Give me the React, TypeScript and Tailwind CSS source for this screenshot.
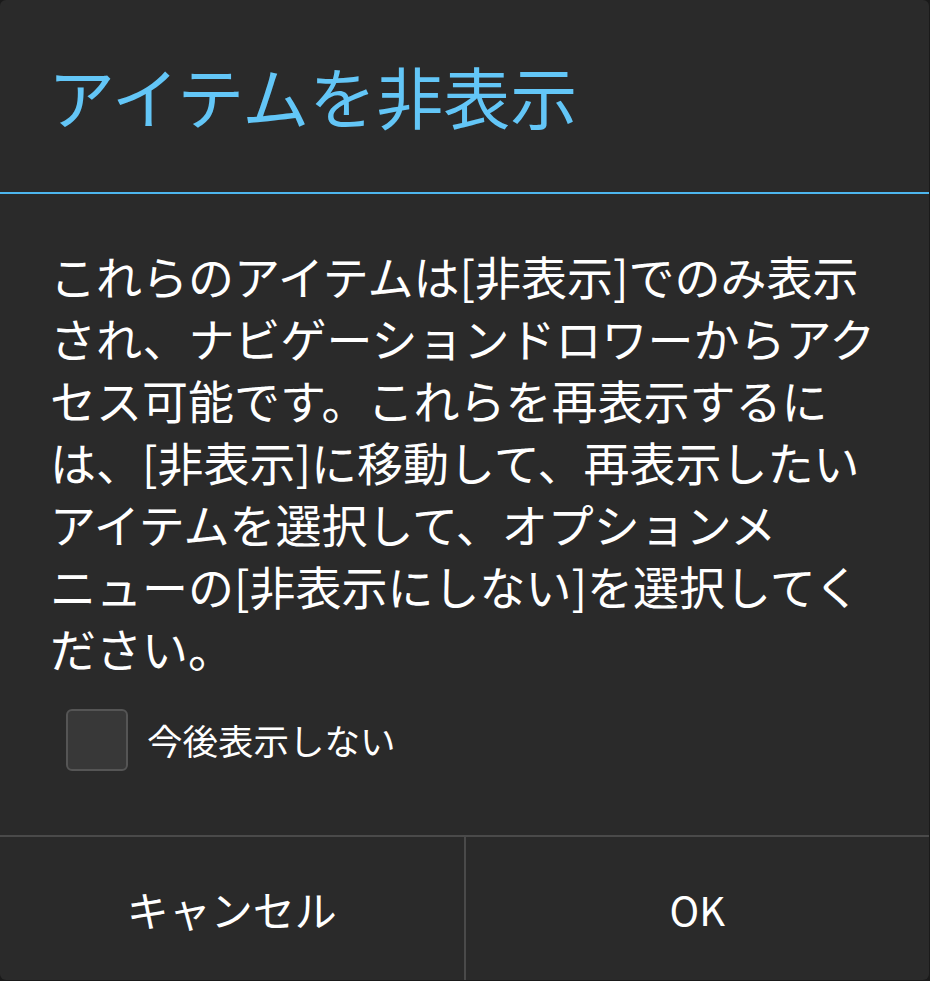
import React, { useState } from "react";

const lines = [
  "これらのアイテムは[非表示]でのみ表示",
  "され、ナビゲーションドロワーからアク",
  "セス可能です。これらを再表示するに",
  "は、[非表示]に移動して、再表示したい",
  "アイテムを選択して、オプションメ",
  "ニューの[非表示にしない]を選択してく",
  "ださい。",
];

const App: React.FC = () => {
  const [dontShow, setDontShow] = useState(false);

  return (
    <div className="w-[930px] h-[981px] bg-[#1a1a1a]">
      <div
        className="flex flex-col w-[929px] h-[980px] bg-[#2a2a2a] rounded-md overflow-hidden text-white"
        style={{ fontFamily: '"Noto Sans CJK JP", "Noto Sans", sans-serif' }}
      >
        {/* Title */}
        <div className="flex items-center h-[192px] pl-[48px] pb-1">
          <h1 className="text-[67px] leading-none text-[#63c6f7] font-normal">アイテムを非表示</h1>
        </div>
        <div className="h-[2px] bg-[#4db6ee]" />

        {/* Message */}
        <div className="flex-1 pl-[50px] pt-[50px]">
          <p className="text-[46px] leading-[62px] whitespace-nowrap">
            {lines.map((l, i) => (
              <span key={i} className="block">{l}</span>
            ))}
          </p>

          <label className="flex items-center gap-[19px] mt-[31px] ml-[16px] cursor-pointer">
            <button
              onClick={() => setDontShow(v => !v)}
              className="w-[62px] h-[62px] rounded-md border-2 border-[#555555] bg-[#383838]"
            />
            <span className="text-[35.5px] leading-none">今後表示しない</span>
          </label>
        </div>

        {/* Buttons */}
        <div className="flex h-[145px] border-t-2 border-[#4a4a4a]">
          <button className="flex-1 flex items-center justify-center text-[42px] text-white">キャンセル</button>
          <div className="w-[2px] bg-[#4a4a4a]" />
          <button className="flex-1 flex items-center justify-center text-[40px] text-white">OK</button>
        </div>
      </div>
    </div>
  );
};

export default App;
